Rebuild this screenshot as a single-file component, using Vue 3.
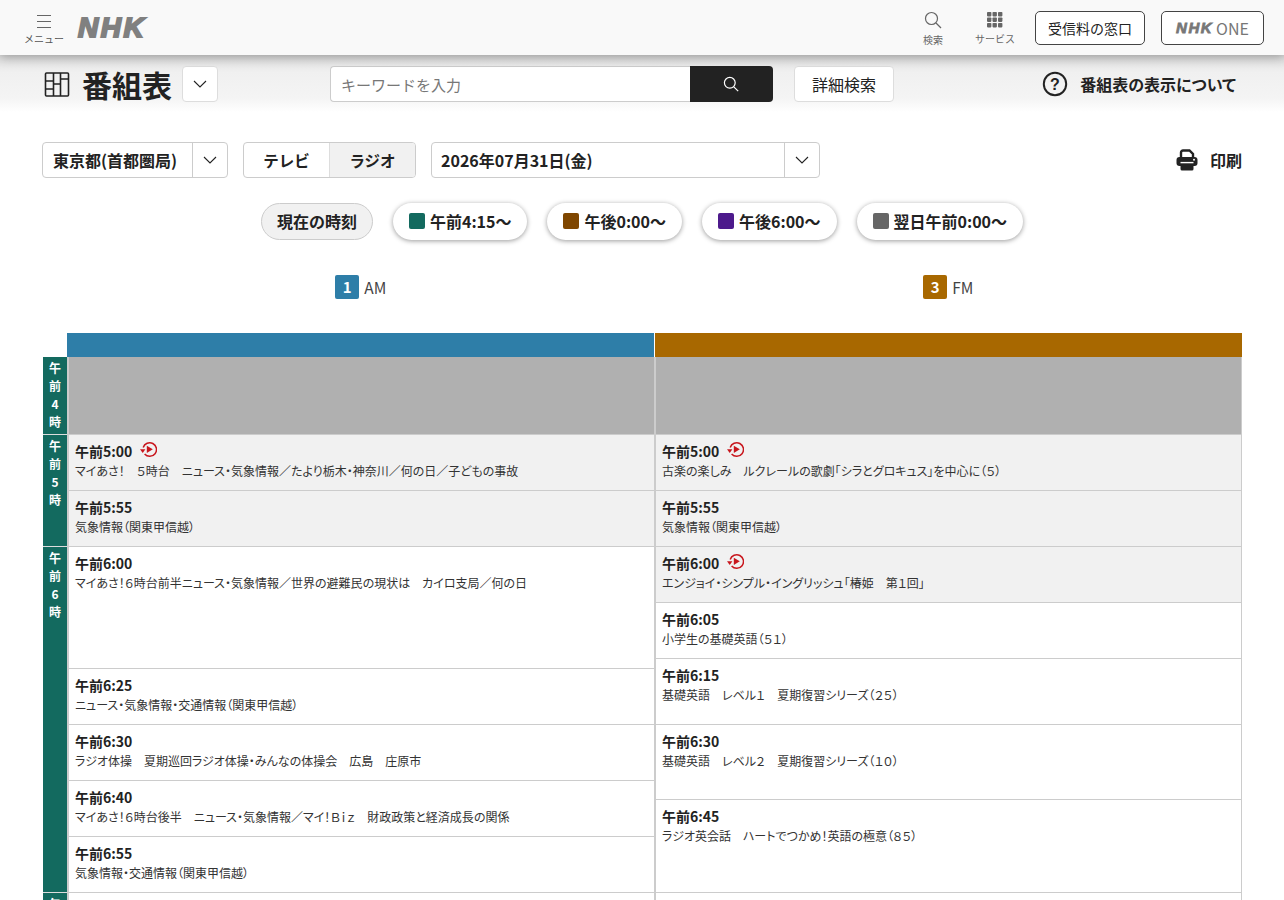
<template>
  <div class="page">
    <header class="top">
      <button class="menu">
        <svg width="16" height="15" viewBox="0 0 16 15"><path d="M1 1.500h14M1 7.500h14M1 13.500h14" stroke="#666" stroke-width="1.2" fill="none" /></svg>
        <span>メニュー</span>
      </button>
      <span class="logo">NHK</span>
      <div class="top-right">
        <div class="top-icon search-icon">
          <svg width="18" height="18" viewBox="0 0 18 18"><circle cx="7.500" cy="7.500" r="6" stroke="#666" stroke-width="1.2" fill="none" /><path d="M12 12l5 5" stroke="#666" stroke-width="1.2" /></svg>
          <span>検索</span>
        </div>
        <div class="top-icon service-icon">
          <svg width="16" height="16" viewBox="0 0 16 16" fill="#666">
            <template v-for="y in [0, 5.5, 11]" :key="y">
              <rect v-for="x in [0, 5.5, 11]" :key="x" :x="x" :y="y" width="4.4" height="4.4" rx="0.8" />
            </template>
          </svg>
          <span>サービス</span>
        </div>
        <button class="outline-btn fee">受信料の窓口</button>
        <button class="outline-btn one"><b>NHK</b>ONE</button>
      </div>
    </header>

    <section class="sub">
      <div class="title">
        <svg width="26" height="26" viewBox="0 0 26 26" fill="none" stroke="#222" stroke-width="1.6">
          <rect x="1.500" y="2" width="23" height="23" rx="1" />
          <path d="M9.500 2v23M16.500 2v23M1.500 10h8M1.500 18h8M9.500 13h7M16.500 8h8" />
        </svg>
        <h1>番組表</h1>
        <button class="chev-box"><svg width="14" height="8" viewBox="0 0 14 8"><path d="M1 1l6 6 6-6" fill="none" stroke="#222" stroke-width="1.1" /></svg></button>
      </div>
      <div class="search">
        <div class="search-input">キーワードを入力</div>
        <button class="search-btn"><svg width="16" height="16" viewBox="0 0 16 16"><circle cx="6.800" cy="6.800" r="5.400" stroke="#fff" stroke-width="1.2" fill="none" /><path d="M10.800 10.800l4.400 4.400" stroke="#fff" stroke-width="1.2" /></svg></button>
      </div>
      <button class="detail">詳細検索</button>
      <div class="about">
        <svg width="26" height="26" viewBox="0 0 26 26"><circle cx="13" cy="13" r="11.200" fill="none" stroke="#222" stroke-width="2" /><text x="13" y="18.500" text-anchor="middle" class="q">?</text></svg>
        <span>番組表の表示について</span>
      </div>
    </section>

    <section class="controls">
      <div class="select area">
        <span>東京都(首都圏局)</span>
        <i class="select-arrow"><svg width="14" height="8" viewBox="0 0 14 8"><path d="M1 1l6 6 6-6" fill="none" stroke="#222" stroke-width="1.1" /></svg></i>
      </div>
      <div class="tabs">
        <span>テレビ</span>
        <span class="on">ラジオ</span>
      </div>
      <div class="select date">
        <span>2026年07月31日(金)</span>
        <i class="select-arrow"><svg width="14" height="8" viewBox="0 0 14 8"><path d="M1 1l6 6 6-6" fill="none" stroke="#222" stroke-width="1.1" /></svg></i>
      </div>
      <div class="print">
        <svg width="22" height="22" viewBox="0 0 22 22">
          <path d="M5 9V3.500a2 2 0 0 1 2-2h6.500L17 5v4" fill="none" stroke="#222" stroke-width="2.400" />
          <rect x="0.500" y="8" width="21" height="9" rx="3" fill="#222" />
          <path d="M4.500 15h13v5a1.500 1.500 0 0 1-1.500 1.500H6A1.500 1.500 0 0 1 4.500 20z" fill="#222" />
          <path d="M4.500 13.600h13" stroke="#fff" stroke-width="1.400" />
          <circle cx="18" cy="10.800" r="1" fill="#fff" />
        </svg>
        <span>印刷</span>
      </div>
    </section>

    <nav class="jumps">
      <span class="pill now">現在の時刻</span>
      <span v-for="j in jumps" :key="j.label" class="pill">
        <i :style="{ background: j.color }"></i>{{ j.label }}
      </span>
    </nav>

    <div class="channels">
      <div class="channel"><b class="am">1</b>AM</div>
      <div class="channel"><b class="fm">3</b>FM</div>
    </div>

    <section class="table">
      <div class="hours">
        <div v-for="h in hours" :key="h.num" class="hour" :style="{ height: h.height + 'px' }">
          <span>午</span><span>前</span><span>{{ h.num }}</span><span>時</span>
        </div>
      </div>
      <div v-for="col in columns" :key="col.name" class="col" :class="col.name">
        <div class="col-head"></div>
        <div class="blank"></div>
        <div
          v-for="p in col.programs"
          :key="p.time"
          class="prog"
          :class="{ past: p.past }"
          :style="{ height: p.height + 'px' }"
        >
          <div class="time">
            {{ p.time }}
            <svg v-if="p.replay" class="replay" width="18" height="18" viewBox="0 0 18 18">
              <path d="M4.200 6.500A6.800 6.800 0 1 1 5.600 13" fill="none" stroke="#c8161d" stroke-width="1.500" />
              <path d="M1 8.200h5.400L3.700 12z" fill="#c8161d" />
              <path d="M7.800 4.700l6 3.600-6 3.600z" fill="#c8161d" />
            </svg>
          </div>
          <div class="desc">{{ p.desc }}</div>
        </div>
        <div class="prog filler"></div>
      </div>
    </section>
  </div>
</template>

<script setup>
const jumps = [
  { label: "午前4:15～", color: "#136a5f" },
  { label: "午後0:00～", color: "#7f4600" },
  { label: "午後6:00～", color: "#4d1a8c" },
  { label: "翌日午前0:00～", color: "#666666" },
];

const hours = [
  { num: 4, height: 78 },
  { num: 5, height: 112 },
  { num: 6, height: 346 },
  { num: 7, height: 60 },
];

const columns = [
  {
    name: "am",
    programs: [
      { time: "午前5:00", height: 56, past: true, replay: true, desc: "マイあさ！　５時台　ニュース・気象情報／たより栃木・神奈川／何の日／子どもの事故" },
      { time: "午前5:55", height: 56, past: true, desc: "気象情報（関東甲信越）" },
      { time: "午前6:00", height: 122, desc: "マイあさ！６時台前半ニュース・気象情報／世界の避難民の現状は　カイロ支局／何の日" },
      { time: "午前6:25", height: 56, desc: "ニュース・気象情報・交通情報（関東甲信越）" },
      { time: "午前6:30", height: 56, desc: "ラジオ体操　夏期巡回ラジオ体操・みんなの体操会　広島　庄原市" },
      { time: "午前6:40", height: 56, desc: "マイあさ！６時台後半　ニュース・気象情報／マイ！Ｂｉｚ　財政政策と経済成長の関係" },
      { time: "午前6:55", height: 56, desc: "気象情報・交通情報（関東甲信越）" },
    ],
  },
  {
    name: "fm",
    programs: [
      { time: "午前5:00", height: 56, past: true, replay: true, desc: "古楽の楽しみ　ルクレールの歌劇「シラとグロキュス」を中心に（５）" },
      { time: "午前5:55", height: 56, past: true, desc: "気象情報（関東甲信越）" },
      { time: "午前6:00", height: 56, past: true, replay: true, desc: "エンジョイ・シンプル・イングリッシュ「椿姫　第１回」" },
      { time: "午前6:05", height: 56, desc: "小学生の基礎英語（５１）" },
      { time: "午前6:15", height: 66, desc: "基礎英語　レベル１　夏期復習シリーズ（２５）" },
      { time: "午前6:30", height: 75, desc: "基礎英語　レベル２　夏期復習シリーズ（１０）" },
      { time: "午前6:45", height: 93, desc: "ラジオ英会話　ハートでつかめ！英語の極意（８５）" },
    ],
  },
];
</script>

<style>
html,
body {
  height: 900px;
  overflow: hidden;
  background: #fff;
}
</style>

<style scoped>
.page {
  font-family: "Noto Sans CJK JP", "Noto Sans", sans-serif;
  color: #222;
  width: 1284px;
}
button {
  font-family: inherit;
  color: inherit;
  background: none;
  border: none;
  padding: 0;
}
.top {
  position: relative;
  z-index: 1;
  height: 55px;
  background: #f9f9f9;
  box-shadow: 0 2px 10px rgba(0, 0, 0, 0.3);
  display: flex;
  align-items: center;
  padding: 0 20px 0 24px;
  box-sizing: border-box;
}
.menu {
  width: 40px;
  display: flex;
  flex-direction: column;
  align-items: center;
  gap: 3px;
  margin-top: 3px;
}
.menu span {
  font-size: 10px;
  line-height: 13px;
  color: #555;
  white-space: nowrap;
}
.logo {
  margin-left: 14px;
  font-family: "Liberation Sans", sans-serif;
  font-style: italic;
  font-weight: 700;
  font-size: 28px;
  letter-spacing: 2.500px;
  color: #808080;
  -webkit-text-stroke: 2px #808080;
}
.top-right {
  margin-left: auto;
  display: flex;
  align-items: center;
}
.top-icon {
  display: flex;
  flex-direction: column;
  align-items: center;
  gap: 4px;
  margin-top: 2px;
}
.top-icon span {
  font-size: 10px;
  line-height: 14px;
  color: #666;
}
.search-icon {
  margin-right: 32px;
}
.service-icon {
  margin-right: 20px;
}
.outline-btn {
  height: 34px;
  box-sizing: border-box;
  border: 1px solid #444;
  border-radius: 5px;
  background: #fff;
  font-size: 14px;
}
.fee {
  width: 110px;
}
.one {
  width: 103px;
  margin-left: 16px;
  color: #777;
  font-size: 16px;
  display: flex;
  align-items: center;
  justify-content: center;
  gap: 3px;
}
.one b {
  font-family: "Liberation Sans", sans-serif;
  font-style: italic;
  font-size: 15px;
  letter-spacing: 1.500px;
  -webkit-text-stroke: 0.8px #777;
}
.sub {
  height: 57px;
  background: linear-gradient(#dcdcdc, #f0f0f0 30%, #f4f4f4 75%, #ffffff);
  display: flex;
  align-items: center;
  padding: 0 48px 0 44px;
  box-sizing: border-box;
}
.title {
  display: flex;
  align-items: center;
  width: 286px;
  margin-top: 1px;
}
.title h1 {
  margin: 0 10px 0 12px;
  font-size: 30px;
  font-weight: 700;
  line-height: 40px;
}
.chev-box {
  width: 36px;
  height: 36px;
  background: #fff;
  border: 1px solid #ddd;
  border-radius: 4px;
  display: flex;
  align-items: center;
  justify-content: center;
}
.search {
  display: flex;
  width: 443px;
  height: 36px;
}
.search-input {
  flex: 1;
  background: #fff;
  border: 1px solid #ccc;
  border-right: none;
  border-radius: 4px 0 0 4px;
  font-size: 15px;
  line-height: 35px;
  padding-left: 10px;
  color: #777;
}
.search-btn {
  width: 83px;
  background: #222;
  border-radius: 0 4px 4px 0;
  display: flex;
  align-items: center;
  justify-content: center;
  padding-right: 2px;
}
.detail {
  margin-left: 21px;
  width: 100px;
  height: 36px;
  background: #fff;
  border: 1px solid #ddd;
  border-radius: 4px;
  font-size: 16px;
}
.about {
  margin-left: auto;
  display: flex;
  align-items: center;
  gap: 12px;
  font-size: 16px;
  font-weight: 700;
  font-feature-settings: "palt";
}
.q {
  font-family: "Liberation Sans", sans-serif;
  font-size: 16px;
  font-weight: 700;
  fill: #222;
}
.controls {
  display: flex;
  align-items: center;
  padding: 30px 42px 0;
}
.select {
  height: 36px;
  box-sizing: border-box;
  border: 1px solid #ccc;
  border-radius: 4px;
  display: flex;
  align-items: center;
  justify-content: space-between;
  font-size: 16px;
  font-weight: 700;
  padding-left: 10px;
}
.select-arrow {
  width: 34px;
  height: 34px;
  border-left: 1px solid #ccc;
  display: flex;
  align-items: center;
  justify-content: center;
}
.area {
  width: 186px;
}
.tabs {
  margin-left: 15px;
  width: 173px;
  height: 36px;
  box-sizing: border-box;
  border: 1px solid #ccc;
  border-radius: 4px;
  display: flex;
  font-size: 15.500px;
  font-weight: 700;
  overflow: hidden;
}
.tabs span {
  flex: 1;
  text-align: center;
  line-height: 34px;
}
.tabs .on {
  background: #f1f1f1;
  border-left: 1px solid #ddd;
}
.date {
  margin-left: 15px;
  width: 389px;
  padding-left: 9px;
}
.print {
  margin-left: auto;
  display: flex;
  align-items: center;
  gap: 12px;
  font-size: 16px;
  font-weight: 700;
}
.jumps {
  display: flex;
  justify-content: center;
  gap: 20px;
  margin-top: 25px;
}
.pill {
  height: 37px;
  box-sizing: border-box;
  border-radius: 19px;
  background: #fff;
  box-shadow: 0 1px 5px rgba(0, 0, 0, 0.4);
  padding: 0 16px 2px;
  display: flex;
  align-items: center;
  font-size: 16px;
  font-weight: 700;
  white-space: nowrap;
}
.pill i {
  width: 16px;
  height: 16px;
  border-radius: 2px;
  margin-right: 5px;
}
.pill.now {
  background: #f1f1f1;
  box-shadow: none;
  border: 1px solid #ccc;
  padding: 0 15px 2px;
}
.channels {
  display: flex;
  margin: 35px 42px 0 67px;
  height: 24px;
}
.channel {
  flex: 1;
  display: flex;
  align-items: center;
  justify-content: center;
  gap: 5px;
  font-size: 15.500px;
  color: #444;
}
.channel b {
  width: 24px;
  height: 24px;
  border-radius: 2px;
  color: #fff;
  font-size: 15px;
  line-height: 24px;
  text-align: center;
}
.channel b.am {
  background: #2e7ea8;
}
.channel b.fm {
  background: #a86800;
}
.table {
  display: flex;
  margin: 34px 42px 0 43px;
  align-items: flex-start;
}
.hours {
  width: 24px;
  margin-top: 24px;
}
.hour {
  box-sizing: border-box;
  background: #136a5f;
  border-bottom: 1px solid #ddd;
  color: #fff;
  font-size: 12px;
  font-weight: 700;
  display: flex;
  flex-direction: column;
  align-items: center;
  padding-top: 2px;
  line-height: 18px;
}
.col {
  width: 587px;
  flex: none;
}
.col + .col {
  margin-left: 1px;
}
.col-head {
  height: 24px;
}
.am .col-head {
  background: #2e7ea8;
}
.fm .col-head {
  background: #a86800;
}
.blank {
  height: 78px;
  box-sizing: border-box;
  background: #b0b0b0;
  border-left: 2px solid #ccc;
  border-bottom: 1px solid #ccc;
}
.fm .blank,
.fm .prog {
  margin-left: -1px;
  border-right: 1px solid #ccc;
}
.prog {
  box-sizing: border-box;
  background: #fff;
  border-left: 2px solid #ccc;
  border-bottom: 1px solid #ccc;
  padding: 6px 6px 0;
}
.prog.past {
  background: #f1f1f1;
}
.filler {
  height: 60px;
}
.time {
  display: flex;
  align-items: center;
  gap: 7px;
  font-size: 14px;
  font-weight: 700;
  line-height: 21px;
  height: 21px;
}
.replay {
  margin-bottom: 3px;
}
.desc {
  font-size: 12px;
  line-height: 18px;
  color: #333;
  white-space: nowrap;
  font-feature-settings: "palt";
}
</style>
